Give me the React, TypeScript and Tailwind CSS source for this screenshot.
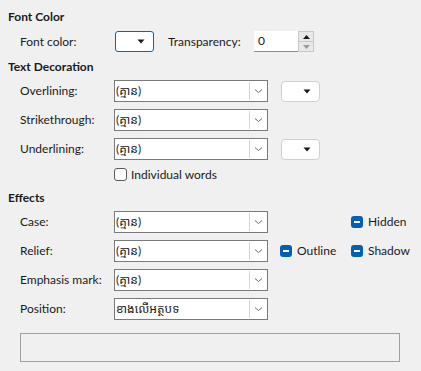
import React from "react";

const FONT = { fontFamily: 'Lato, "Noto Sans Khmer", "Khmer OS", "Noto Sans", sans-serif' };

function Combo({ value }: { value: string }) {
  return (
    <div className="flex h-[22px] w-[154px] items-stretch border border-[#7a7a7a] bg-white">
      <div className="flex flex-1 items-center pl-[1px] text-[12px] leading-none text-[#1a1a1a]">{value}</div>
      <div className="my-[1px] mr-[1px] flex w-[17px] items-center justify-center border-l border-[#d4d4d4] bg-white">
        <svg width="9" height="6" viewBox="0 0 9 6">
          <path d="M1 1.5 L4.5 4.5 L8 1.5" fill="none" stroke="#707070" strokeWidth="1" />
        </svg>
      </div>
    </div>
  );
}

function ColorBtn({ active }: { active?: boolean }) {
  return (
    <div
      className={
        active
          ? "flex h-[21px] w-[39px] items-center justify-end rounded-[3px] border border-[#0067c0] bg-white pr-[8px]"
          : "flex h-[21px] w-[39px] items-center justify-end rounded-[4px] border border-[#d0d0d0] bg-white pr-[8px]"
      }
    >
      <svg width="8" height="5" viewBox="0 0 8 5">
        <path d="M0.5 0.5 L7.5 0.5 L4 4.5 Z" fill="#1a1a1a" />
      </svg>
    </div>
  );
}

function BlueCheck({ label }: { label: string }) {
  return (
    <div className="flex items-center">
      <div className="flex h-[12px] w-[12px] items-center justify-center rounded-[3px] bg-[#005fb8]">
        <div className="h-[1.5px] w-[6px] bg-white" />
      </div>
      <span className="ml-[5px] text-[12px] leading-none text-[#1a1a1a]">{label}</span>
    </div>
  );
}

function Row({ label, children }: { label: string; children: React.ReactNode }) {
  return (
    <div className="flex items-center pl-[20px]">
      <div className="w-[94px] text-[12px] leading-none text-[#1a1a1a]">{label}</div>
      {children}
    </div>
  );
}

export default function App() {
  const none = "(គ្មាន)";
  return (
    <div style={FONT} className="flex h-[371px] w-[421px] flex-col bg-[#f0f0f0] pt-[9px] text-[#1a1a1a]">
      <div className="flex h-[16px] items-center pl-[8px] text-[12px] font-bold leading-none">Font Color</div>

      <div className="mt-[6px] flex h-[21px] items-center pl-[20px]">
        <div className="w-[95px] text-[12px] leading-none">Font color:</div>
        <ColorBtn active />
        <div className="ml-[14px] w-[86px] text-[12px] leading-none">Transparency:</div>
        <div className="flex h-[21px] items-stretch">
          <div className="flex w-[44px] items-center border-b border-[#8a8a8a] bg-white pl-[4px] text-[12px] leading-none">0</div>
          <div className="flex w-[16px] flex-col border border-[#c8c8c8] bg-[#e8e8e8]">
            <div className="flex flex-1 items-center justify-center border-b border-[#c8c8c8]">
              <svg width="7" height="4" viewBox="0 0 7 4">
                <path d="M0 4 L7 4 L3.5 0 Z" fill="#1a1a1a" />
              </svg>
            </div>
            <div className="flex flex-1 items-center justify-center">
              <svg width="7" height="4" viewBox="0 0 7 4">
                <path d="M0 0 L7 0 L3.5 4 Z" fill="#9a9a9a" />
              </svg>
            </div>
          </div>
        </div>
      </div>

      <div className="mt-[7px] flex h-[16px] items-center pl-[8px] text-[12px] font-bold leading-none">Text Decoration</div>

      <div className="mt-[5px]">
        <Row label="Overlining:">
          <Combo value={none} />
          <div className="ml-[13px]">
            <ColorBtn />
          </div>
        </Row>
      </div>
      <div className="mt-[7px]">
        <Row label="Strikethrough:">
          <Combo value={none} />
        </Row>
      </div>
      <div className="mt-[7px]">
        <Row label="Underlining:">
          <Combo value={none} />
          <div className="ml-[13px]">
            <ColorBtn />
          </div>
        </Row>
      </div>

      <div className="mt-[8px] flex h-[13px] items-center pl-[114px]">
        <div className="h-[13px] w-[13px] rounded-[3px] border border-[#5a5a5a] bg-[#fbfbfb]" />
        <span className="ml-[4px] text-[12px] leading-none">Individual words</span>
      </div>

      <div className="mt-[9px] flex h-[16px] items-center pl-[8px] text-[12px] font-bold leading-none">Effects</div>

      <div className="mt-[5px]">
        <Row label="Case:">
          <Combo value={none} />
          <div className="ml-[83px]">
            <BlueCheck label="Hidden" />
          </div>
        </Row>
      </div>
      <div className="mt-[7px]">
        <Row label="Relief:">
          <Combo value={none} />
          <div className="ml-[12px] w-[71px]">
            <BlueCheck label="Outline" />
          </div>
          <BlueCheck label="Shadow" />
        </Row>
      </div>
      <div className="mt-[7px]">
        <Row label="Emphasis mark:">
          <Combo value={none} />
        </Row>
      </div>
      <div className="mt-[7px]">
        <Row label="Position:">
          <Combo value="ខាងលើអត្ថបទ" />
        </Row>
      </div>

      <div className="ml-[20px] mt-[13px] h-[29px] w-[380px] border border-[#a0a0a0] bg-[#f0f0f0]" />
    </div>
  );
}
